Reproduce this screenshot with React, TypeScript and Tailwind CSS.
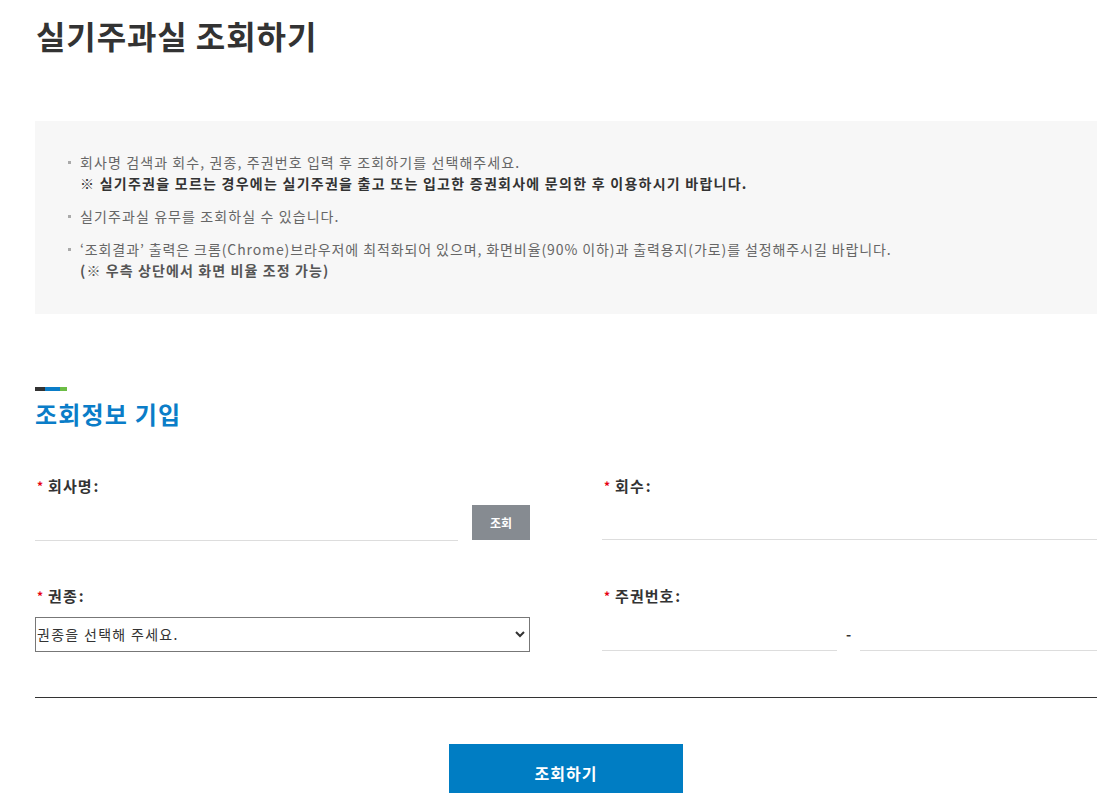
import React from 'react';

const font = { fontFamily: '"Noto Sans CJK KR", "Noto Sans", sans-serif' };

function Label({ text }: { text: string }) {
  return (
    <div className="flex items-center h-[22px] text-[15px] font-bold text-[#333] tracking-[1px]">
      <span className="text-[#e60012] text-[12px] mr-[4px] ml-[2px]">*</span>
      {text}
      <span className="ml-[1px]">:</span>
    </div>
  );
}

export default function App() {
  return (
    <div className="bg-white min-h-screen overflow-hidden" style={font}>
      <div className="ml-[35px] w-[1062px]">
        <h1 className="pt-[15px] text-[32px] leading-[40px] font-bold text-[#333] pl-[1px] tracking-[0.9px]">실기주과실 조회하기</h1>

        <div className="mt-[66px] bg-[#f7f7f7] pt-[31px] pb-[33px] pl-[33px] pr-6">
          <ul className="space-y-[12px] text-[14px] leading-[21px] text-[#666] tracking-[1.05px]">
            <li className="flex">
              <span className="w-[3px] h-[3px] bg-[#aaa] mt-[9px] mr-[9px] shrink-0" />
              <div>
                <p className="tracking-[1.1px]">회사명 검색과 회수, 권종, 주권번호 입력 후 조회하기를 선택해주세요.</p>
                <p className="font-bold text-[#333] tracking-[1.25px]">※ 실기주권을 모르는 경우에는 실기주권을 출고 또는 입고한 증권회사에 문의한 후 이용하시기 바랍니다.</p>
              </div>
            </li>
            <li className="flex">
              <span className="w-[3px] h-[3px] bg-[#aaa] mt-[9px] mr-[9px] shrink-0" />
              <p className="tracking-[1.1px]">실기주과실 유무를 조회하실 수 있습니다.</p>
            </li>
            <li className="flex">
              <span className="w-[3px] h-[3px] bg-[#aaa] mt-[9px] mr-[9px] shrink-0" />
              <div>
                <p className="tracking-[0.9px]">‘조회결과’ 출력은 크롬(Chrome)브라우저에 최적화되어 있으며, 화면비율(90% 이하)과 출력용지(가로)를 설정해주시길 바랍니다.</p>
                <p className="font-bold text-[#555] tracking-[1.1px]">(※ 우측 상단에서 화면 비율 조정 가능)</p>
              </div>
            </li>
          </ul>
        </div>

        <div className="mt-[73px] flex h-[4px] w-[32px]">
          <span className="w-[10px] bg-[#333]" />
          <span className="w-[15px] bg-[#0a7dc8]" />
          <span className="w-[7px] bg-[#6cbd45]" />
        </div>
        <h2 className="mt-[7px] text-[24px] leading-[32px] font-semibold text-[#0a7dc8] tracking-[1.2px]">조회정보 기입</h2>

        <div className="mt-[45px] grid grid-cols-2 gap-x-[72px]">
          <div>
            <Label text="회사명" />
            <div className="mt-[8px] flex items-end gap-[14px]">
              <input className="flex-1 h-[36px] border-b border-[#ddd] outline-none text-[14px]" />
              <button className="w-[58px] h-[35px] bg-[#868b91] text-white text-[12px] font-bold mb-[1px]">조회</button>
            </div>
          </div>
          <div>
            <Label text="회수" />
            <input className="mt-[8px] w-full h-[35px] border-b border-[#ddd] outline-none text-[14px]" />
          </div>

          <div className="mt-[44px]">
            <Label text="권종" />
            <div className="mt-[10px] relative">
              <select className="w-full h-[35px] border border-[#777] text-[14px] text-[#333] pl-[1px] tracking-[1.3px] appearance-none bg-white outline-none">
                <option>권종을 선택해 주세요.</option>
              </select>
              <svg className="absolute right-[5px] top-[13px] pointer-events-none" width="10" height="8" viewBox="0 0 10 8">
                <path d="M1 2 L5 6 L9 2" stroke="#333" strokeWidth="2" fill="none" />
              </svg>
            </div>
          </div>
          <div className="mt-[44px]">
            <Label text="주권번호" />
            <div className="mt-[10px] flex items-center">
              <input className="w-[235px] h-[34px] border-b border-[#ddd] outline-none text-[14px]" />
              <span className="w-[23px] text-center text-[14px] font-bold text-[#333]">-</span>
              <input className="flex-1 h-[34px] border-b border-[#ddd] outline-none text-[14px]" />
            </div>
          </div>
        </div>

        <div className="mt-[45px] border-t border-[#333]" />

        <div className="mt-[46px] flex justify-center">
          <button className="w-[234px] h-[58px] bg-[#007dc3] text-white text-[16px] font-bold tracking-[1px]">조회하기</button>
        </div>
      </div>
    </div>
  );
}
